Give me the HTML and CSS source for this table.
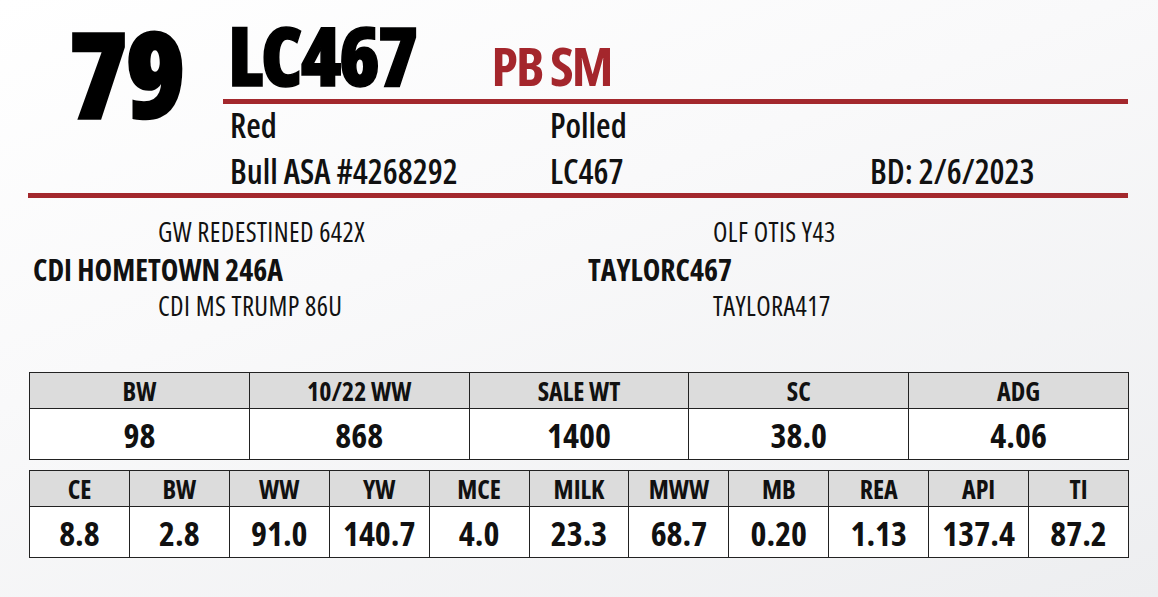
FILE: index.html
```html
<!DOCTYPE html>
<html lang="en">
<head>
<meta charset="utf-8">
<title>Lot 79 - LC467</title>
<link rel="stylesheet" href="styles.css">
</head>
<body>
<div class="sheet">
  <div class="top">
    <div class="lot">79</div>
    <div class="main">
      <div class="title">
        <span class="code">LC467</span>
        <span class="tag">PB SM</span>
      </div>
      <div class="info">
        <span>Red</span><span>Polled</span><span></span>
        <span>Bull ASA #4268292</span><span>LC467</span><span>BD: 2/6/2023</span>
      </div>
    </div>
  </div>

  <div class="pedigree">
    <div class="side">
      <div class="anc">GW REDESTINED 642X</div>
      <div class="parent">CDI HOMETOWN 246A</div>
      <div class="anc">CDI MS TRUMP 86U</div>
    </div>
    <div class="side">
      <div class="anc">OLF OTIS Y43</div>
      <div class="parent">TAYLORC467</div>
      <div class="anc">TAYLORA417</div>
    </div>
  </div>

  <table class="stats five">
    <tr class="head"><th>BW</th><th>10/22 WW</th><th>SALE WT</th><th>SC</th><th>ADG</th></tr>
    <tr class="vals"><td>98</td><td>868</td><td>1400</td><td>38.0</td><td>4.06</td></tr>
  </table>

  <table class="stats epds">
    <tr class="head"><th>CE</th><th>BW</th><th>WW</th><th>YW</th><th>MCE</th><th>MILK</th><th>MWW</th><th>MB</th><th>REA</th><th>API</th><th>TI</th></tr>
    <tr class="vals"><td>8.8</td><td>2.8</td><td>91.0</td><td>140.7</td><td>4.0</td><td>23.3</td><td>68.7</td><td>0.20</td><td>1.13</td><td>137.4</td><td>87.2</td></tr>
  </table>
</div>
</body>
</html>
```

FILE: styles.css
```css
* { box-sizing: border-box; }

html, body {
  margin: 0;
  padding: 0;
}

body {
  width: 1158px;
  height: 597px;
  overflow: hidden;
  background: linear-gradient(160deg, #ffffff 0%, #f9f9fa 40%, #edeef0 100%);
  font-family: "Open Sans", sans-serif;
  font-stretch: 75%;
  color: #111;
}

.sheet {
  padding-left: 28px;
  width: 1128px;
}

.top {
  display: flex;
  border-bottom: 5px solid #a3282d;
}

.lot {
  width: 195px;
  padding-left: 41px;
  padding-top: 7px;
  font-size: 119px;
  line-height: 130px;
  font-weight: 800;
  letter-spacing: -2px;
  -webkit-text-stroke: 2.5px #000;
  color: #000;
}

.main {
  flex: 1;
}

.title {
  display: flex;
  align-items: baseline;
  padding-left: 5px;
  padding-top: 14px;
  padding-bottom: 5px;
  border-bottom: 5px solid #a3282d;
}

.code {
  font-size: 82px;
  line-height: 80px;
  font-weight: 800;
  letter-spacing: -2px;
  -webkit-text-stroke: 1.5px #000;
  color: #000;
}

.tag {
  margin-left: 75px;
  font-size: 54px;
  line-height: 1;
  font-weight: bold;
  letter-spacing: -2px;
  color: #a4262c;
}

.info {
  display: grid;
  grid-template-columns: 320px 320px auto;
  grid-auto-rows: 46px;
  height: 89px;
  padding-left: 7px;
  font-size: 33.5px;
  line-height: 42px;
  font-weight: 600;
}

.pedigree {
  display: grid;
  grid-template-columns: 555px 555px;
  padding-left: 5px;
  margin-top: 16px;
}

.side > div {
  height: 37px;
  line-height: 37px;
  white-space: nowrap;
}

.anc {
  padding-left: 125px;
  font-size: 26.5px;
  letter-spacing: 0.4px;
}

.parent {
  font-size: 29.8px;
  font-weight: bold;
}

.stats {
  width: 1100px;
  margin-left: 1px;
  border-collapse: collapse;
  table-layout: fixed;
  text-align: center;
  font-weight: bold;
}

.stats th,
.stats td {
  border: 1px solid #222;
  padding: 0;
}

.five { margin-top: 47px; }
.epds { margin-top: 10px; }

.head th {
  background: #dcdcdc;
  height: 35px;
  font-size: 26px;
  line-height: 33px;
  padding-top: 2px;
}

.vals td {
  background: #fff;
  height: 51px;
  font-size: 34px;
  line-height: 48px;
  padding-top: 2px;
}
```
